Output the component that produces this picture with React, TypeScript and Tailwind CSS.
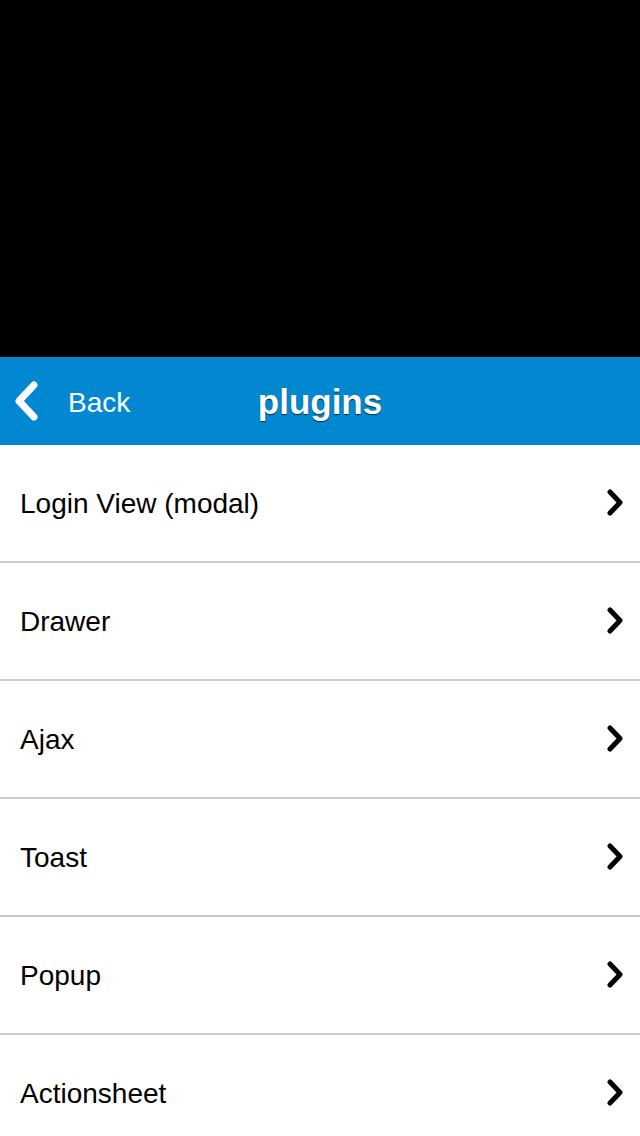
import React from 'react';

const items = ['Login View (modal)', 'Drawer', 'Ajax', 'Toast', 'Popup', 'Actionsheet'];

const ChevronRight = () => (
  <svg width="20" height="28" viewBox="0 0 20 28" className="shrink-0">
    <path d="M4 3 L14 13.5 L4 24" fill="none" stroke="#000" strokeWidth="5" strokeLinecap="round" strokeLinejoin="round" />
  </svg>
);

const ChevronLeft = () => (
  <svg width="30" height="40" viewBox="0 0 30 40" className="shrink-0">
    <path d="M22 4 L7 20 L22 36" fill="none" stroke="#fff" strokeWidth="7" strokeLinecap="round" strokeLinejoin="round" />
  </svg>
);

export default function App() {
  return (
    <div className="w-[640px] h-[1136px] overflow-hidden bg-white font-['Liberation_Sans',Arial,sans-serif]">
      <div className="h-[357px] bg-black" />
      <div className="relative h-[88px] bg-[#0288d1] flex items-center">
        <div className="flex items-center pl-[12px] gap-[26px]">
          <ChevronLeft />
          <span className="text-white text-[28px] leading-none mt-[3px]">Back</span>
        </div>
        <div className="absolute inset-0 flex items-center justify-center pointer-events-none">
          <span className="text-white text-[35px] font-bold leading-none [text-shadow:0_1px_1px_rgba(0,0,0,0.7)]">plugins</span>
        </div>
      </div>
      <ul>
        {items.map((item) => (
          <li key={item} className="h-[118px] border-b-2 border-[#cbcbcb] flex items-center justify-between pl-[20px] pr-[14px]">
            <span className="text-black text-[28px] leading-none mt-[2px]">{item}</span>
            <ChevronRight />
          </li>
        ))}
      </ul>
    </div>
  );
}
